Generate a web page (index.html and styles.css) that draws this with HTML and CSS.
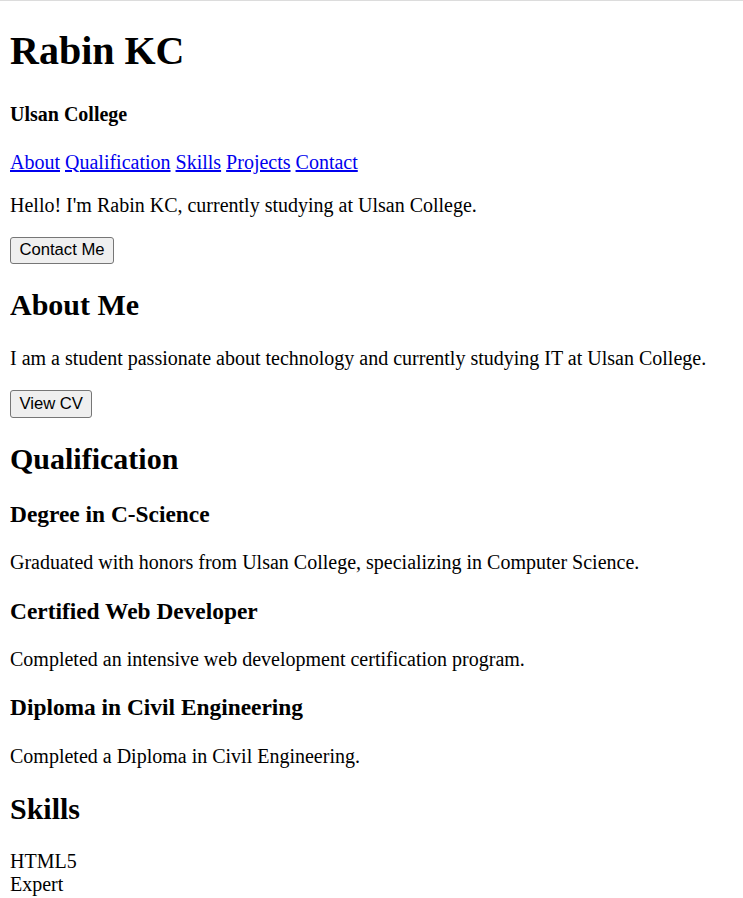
FILE: index.html
```html
<!DOCTYPE html>
<html lang="en">
<head>
<meta charset="utf-8">
<title>Rabin KC</title>
<link rel="stylesheet" href="styles.css">
</head>
<body class="page">
<header class="hero">
  <h1 class="name">Rabin KC</h1>
  <h4 class="school">Ulsan College</h4>
  <nav class="nav">
    <a href="#about">About</a>
    <a href="#qualification">Qualification</a>
    <a href="#skills">Skills</a>
    <a href="#projects">Projects</a>
    <a href="#contact">Contact</a>
  </nav>
  <p class="text">Hello! I'm Rabin KC, currently studying at Ulsan College.</p>
  <button class="btn" type="button">Contact Me</button>
</header>
<section class="section" id="about">
  <h2 class="section-title">About Me</h2>
  <p class="text">I am a student passionate about technology and currently studying IT at Ulsan College.</p>
  <button class="btn" type="button">View CV</button>
</section>
<section class="section" id="qualification">
  <h2 class="section-title">Qualification</h2>
  <h3 class="item-title">Degree in C-Science</h3>
  <p class="text">Graduated with honors from Ulsan College, specializing in Computer Science.</p>
  <h3 class="item-title">Certified Web Developer</h3>
  <p class="text">Completed an intensive web development certification program.</p>
  <h3 class="item-title">Diploma in Civil Engineering</h3>
  <p class="text">Completed a Diploma in Civil Engineering.</p>
</section>
<section class="section" id="skills">
  <h2 class="section-title">Skills</h2>
  <div class="skill">
    <div class="skill-name">HTML5</div>
    <div class="skill-level">Expert</div>
  </div>
</section>
</body>
</html>
```
FILE: styles.css
```css
html {
  border-top: 1px solid #dcdcdc;
}
.page {
  margin: 10px;
  font-family: "Liberation Serif", "Times New Roman", serif;
  font-size: 20px;
  color: #000;
  background: #fff;
}
.name {
  font-size: 40px;
  font-weight: bold;
  margin: 16.3px 0 28.8px;
}
.school {
  font-size: 20px;
  font-weight: bold;
  margin: 28.6px 0 24.6px;
}
.nav a {
  color: #0000ee;
  text-decoration: underline;
}
.text {
  margin: 20px 0;
}
.btn {
  font-family: "Liberation Sans", Arial, sans-serif;
  font-size: 16.67px;
  color: #000;
  background: #efefef;
  border: 1px solid #767676;
  border-radius: 3px;
  padding: 2.75px 8.4px;
  margin: 0;
}
.section-title {
  font-size: 30px;
  font-weight: bold;
  margin: 24.2px 0 24.9px;
}
.item-title {
  font-size: 23.4px;
  font-weight: bold;
  margin: 23.4px 0;
}
.skill {
  margin-top: -0.6px;
}
```
